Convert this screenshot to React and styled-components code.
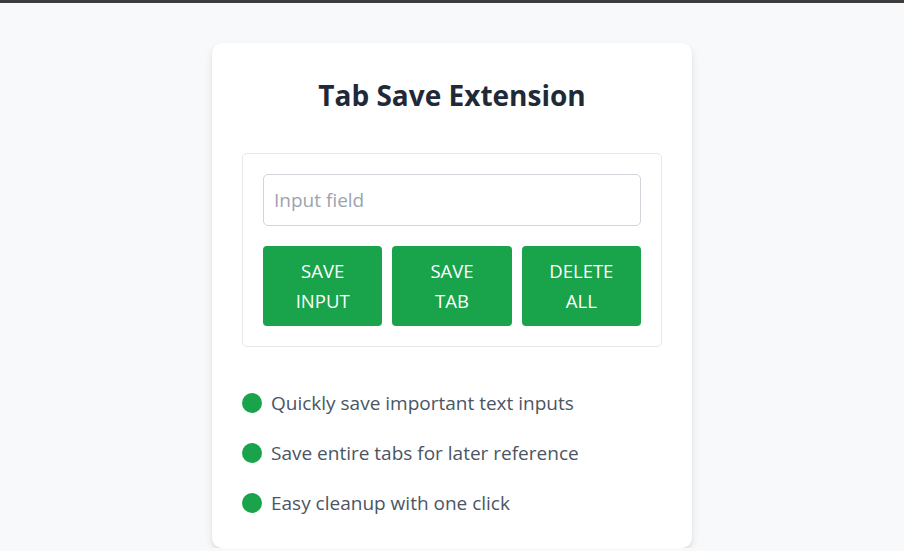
import React from 'react';
import styled, { createGlobalStyle } from 'styled-components';

const GlobalStyle = createGlobalStyle`
  * {
    box-sizing: border-box;
  }
  body {
    margin: 0;
    background: #f8f9fb;
    border-top: 3px solid #3d3d3d;
    font-family: "Open Sans", "Noto Sans", sans-serif;
  }
`;

const features = [
  'Quickly save important text inputs',
  'Save entire tabs for later reference',
  'Easy cleanup with one click',
];

const actions = [
  ['SAVE', 'INPUT'],
  ['SAVE', 'TAB'],
  ['DELETE', 'ALL'],
];

const App = () => {
  return (
    <>
      <GlobalStyle />
      <Page>
        <Card>
          <Title>Tab Save Extension</Title>
          <Panel>
            <TextInput type="text" placeholder="Input field" />
            <ButtonRow>
              {actions.map(([top, bottom]) => (
                <ActionButton key={top + bottom}>
                  {top}
                  <br />
                  {bottom}
                </ActionButton>
              ))}
            </ButtonRow>
          </Panel>
          <FeatureList>
            {features.map(text => (
              <FeatureItem key={text}>
                <Dot />
                <span>{text}</span>
              </FeatureItem>
            ))}
          </FeatureList>
        </Card>
      </Page>
    </>
  );
};

const Page = styled.main`
  display: flex;
  justify-content: center;
  padding-top: 40px;
`;

const Card = styled.section`
  width: 480px;
  padding: 30px;
  background: #ffffff;
  border-radius: 10px;
  box-shadow: 0 4px 10px rgba(0, 0, 0, 0.08), 0 2px 4px rgba(0, 0, 0, 0.06);
`;

const Title = styled.h1`
  margin: 5px 0 41px;
  font-size: 28px;
  line-height: 34px;
  font-weight: 700;
  text-align: center;
  color: #1f2937;
`;

const Panel = styled.div`
  display: flex;
  flex-direction: column;
  gap: 20px;
  padding: 20px;
  border: 1px solid #e5e7eb;
  border-radius: 5px;
`;

const TextInput = styled.input`
  height: 52px;
  width: 100%;
  padding: 0 10px;
  border: 1px solid #d1d5db;
  border-radius: 5px;
  font-family: inherit;
  font-size: 19px;
  color: #374151;
  outline: none;

  &::placeholder {
    color: #9ca3af;
  }
`;

const ButtonRow = styled.div`
  display: grid;
  grid-template-columns: repeat(3, 1fr);
  gap: 10px;
`;

const ActionButton = styled.button`
  height: 80px;
  border: none;
  border-radius: 4px;
  background: #19a34b;
  color: #ffffff;
  font-family: inherit;
  font-size: 18.5px;
  line-height: 30px;
  cursor: pointer;
`;

const FeatureList = styled.ul`
  list-style: none;
  margin: 41px 0 0;
  padding: 0;
  display: flex;
  flex-direction: column;
  gap: 20px;
`;

const FeatureItem = styled.li`
  display: flex;
  align-items: center;
  gap: 9px;
  height: 30px;
  font-size: 19px;
  color: #4b5563;
`;

const Dot = styled.span`
  width: 20px;
  height: 20px;
  border-radius: 50%;
  background: #19a34b;
  flex-shrink: 0;
`;

export default App;
